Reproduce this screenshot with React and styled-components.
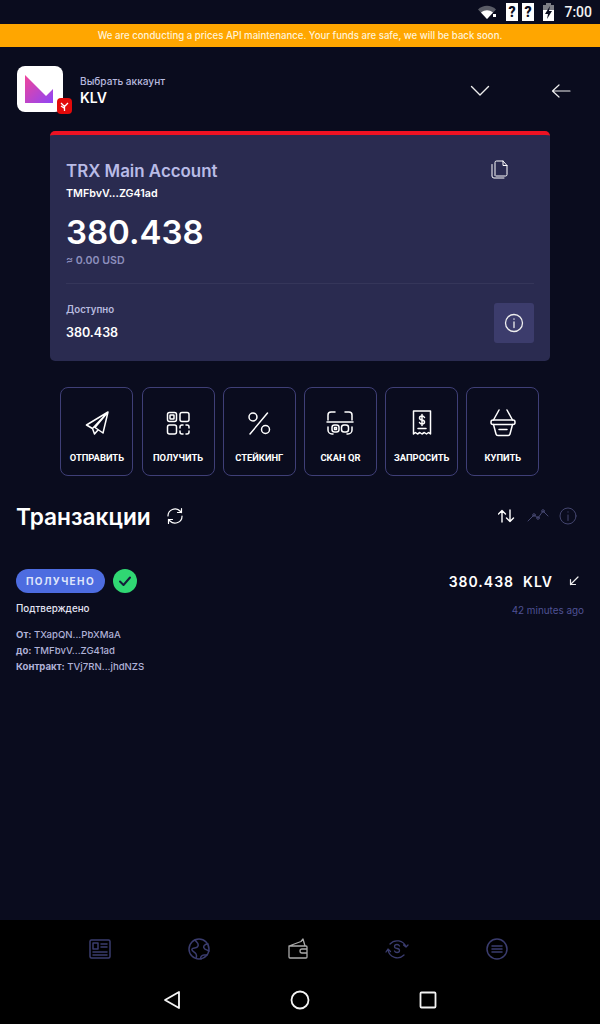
import React from "react";
import styled, { createGlobalStyle } from "styled-components";

const Global = createGlobalStyle`
  html, body { margin: 0; padding: 0; background: #0a0c1e; }
  * { box-sizing: border-box; }
`;

const Page = styled.div`
  width: 600px;
  height: 1024px;
  display: flex;
  flex-direction: column;
  background: #0a0c1e;
  color: #fff;
  font-family: Inter, "Noto Sans", sans-serif;
  overflow: hidden;
`;

const StatusBar = styled.div`
  height: 24px;
  display: flex;
  align-items: center;
  justify-content: flex-end;
  gap: 4px;
  padding-right: 8px;
`;

const StatusTime = styled.span`
  font-family: Roboto, sans-serif;
  font-size: 14px;
  font-weight: 500;
  margin-left: 6px;
  color: #f2f2f2;
`;

const Banner = styled.div`
  height: 23px;
  background: #ffa600;
  display: flex;
  align-items: center;
  justify-content: center;
  font-size: 9.65px;
  font-weight: 500;
  color: #fff3d8;
`;

const Main = styled.main`
  flex: 1;
  display: flex;
  flex-direction: column;
`;

const Header = styled.header`
  display: flex;
  align-items: center;
  padding: 19px 29px 0 17px;
`;

const LogoWrap = styled.div`
  position: relative;
  width: 46px;
  height: 46px;
  border-radius: 8px;
  background: #fff;
  display: flex;
  align-items: center;
  justify-content: center;
  margin-right: 17px;
`;

const Badge = styled.div`
  position: absolute;
  right: -9px;
  bottom: -2px;
  width: 15px;
  height: 16px;
  border-radius: 4px;
  background: #e20a0a;
  display: flex;
  align-items: center;
  justify-content: center;
`;

const AccountInfo = styled.div`
  flex: 1;
  display: flex;
  flex-direction: column;
  gap: 2px;
  padding-top: 2px;
`;

const AccountLabel = styled.div`
  font-size: 10.1px;
  font-weight: 500;
  color: #b7b9df;
`;

const AccountName = styled.div`
  font-size: 14px;
  font-weight: 600;
  color: #fff;
`;

const HeaderIcons = styled.div`
  display: flex;
  align-items: center;
  gap: 61px;
  padding-top: 3px;
`;

const Card = styled.section`
  margin: 19px 50px 0;
  height: 230px;
  border-radius: 5px;
  background: #2a2b50;
  border-top: 4px solid #ee1223;
  padding: 0 16px;
  display: flex;
  flex-direction: column;
`;

const CardTop = styled.div`
  display: flex;
  justify-content: space-between;
  height: 149px;
  border-bottom: 1px solid #35365a;
`;

const CardTitle = styled.div`
  font-size: 16.9px;
  font-weight: 600;
  line-height: 20px;
  margin-top: 26px;
  color: #b9bbe6;
`;

const CardAddress = styled.div`
  font-size: 10.7px;
  font-weight: 600;
  line-height: 14px;
  margin-top: 6px;
  color: #fff;
`;

const CardBalance = styled.div`
  font-size: 33px;
  font-weight: 600;
  line-height: 40px;
  margin-top: 11px;
  color: #fff;
`;

const CardUsd = styled.div`
  font-size: 10.6px;
  font-weight: 600;
  line-height: 14px;
  margin-top: 2px;
  color: #8d8fbd;
`;

const CopyButton = styled.div`
  margin: 25px 26px 0 0;
`;

const CardBottom = styled.div`
  flex: 1;
  display: flex;
  justify-content: space-between;
  align-items: flex-start;
  padding-top: 19px;
`;

const AvailableLabel = styled.div`
  font-size: 9.7px;
  font-weight: 600;
  line-height: 14px;
  color: #b7b9df;
`;

const AvailableValue = styled.div`
  font-size: 12.5px;
  font-weight: 600;
  line-height: 16px;
  margin-top: 8px;
  color: #fff;
`;

const InfoButton = styled.div`
  width: 40px;
  height: 40px;
  border-radius: 3px;
  background: #3c3c6c;
  display: flex;
  align-items: center;
  justify-content: center;
`;

const Actions = styled.div`
  display: flex;
  gap: 8.2px;
  margin: 26px 0 0 60.4px;
`;

const Action = styled.div`
  width: 73px;
  height: 89px;
  border: 1px solid #3f3f77;
  border-radius: 8px;
  display: flex;
  flex-direction: column;
  align-items: center;
  padding-top: 22px;
`;

const ActionIcon = styled.div`
  height: 26px;
  display: flex;
  align-items: center;
  justify-content: center;
`;

const ActionLabel = styled.div`
  margin-top: 16px;
  font-family: Roboto, sans-serif;
  font-size: 9.4px;
  font-weight: 700;
  color: #fff;
`;

const SectionHead = styled.div`
  display: flex;
  align-items: center;
  margin-top: 26px;
  padding: 0 23px 0 16px;
  height: 28px;
`;

const SectionTitle = styled.h2`
  margin: 0 15px 0 0;
  font-size: 22.7px;
  font-weight: 600;
  color: #fff;
`;

const SectionTools = styled.div`
  margin-left: auto;
  display: flex;
  align-items: center;
  gap: 10px;
`;

const Tx = styled.div`
  display: flex;
  justify-content: space-between;
  margin-top: 39px;
  padding: 0 16px;
`;

const TxLeft = styled.div`
  display: flex;
  flex-direction: column;
`;

const TxStatusRow = styled.div`
  display: flex;
  align-items: center;
  gap: 8px;
`;

const Pill = styled.div`
  width: 89px;
  height: 24px;
  border-radius: 12px;
  background: #4d6ce0;
  display: flex;
  align-items: center;
  justify-content: center;
  font-size: 10px;
  font-weight: 700;
  letter-spacing: 1.4px;
  color: #dfe5fb;
`;

const CheckDot = styled.div`
  width: 24px;
  height: 24px;
  border-radius: 50%;
  background: #30d873;
  display: flex;
  align-items: center;
  justify-content: center;
`;

const Confirmed = styled.div`
  margin-top: 9px;
  font-size: 9.8px;
  font-weight: 500;
  line-height: 14px;
  color: #e4e4f2;
`;

const Addresses = styled.div`
  margin-top: 11px;
  display: flex;
  flex-direction: column;
`;

const AddressRow = styled.div`
  font-size: 9.6px;
  font-weight: 500;
  line-height: 16px;
  color: #b0b2d8;
  b { font-weight: 700; }
`;

const TxRight = styled.div`
  display: flex;
  flex-direction: column;
  align-items: flex-end;
`;

const Amount = styled.div`
  display: flex;
  align-items: center;
  height: 24px;
  gap: 16px;
  padding-right: 5px;
  font-size: 14px;
  font-weight: 600;
  letter-spacing: 1px;
  color: #fff;
`;

const Ago = styled.div`
  margin-top: 10px;
  font-size: 9.9px;
  line-height: 14px;
  color: #4f5294;
`;

const BottomNav = styled.nav`
  height: 56px;
  background: #000;
  display: flex;
  align-items: center;
  justify-content: space-between;
  padding: 2px 92px 0 89px;
`;

const AndroidBar = styled.div`
  height: 48px;
  background: #000;
  display: flex;
  align-items: center;
  justify-content: space-between;
  padding: 0 163px;
`;

const Svg = ({ size = 24, w, h, color = "#fff", sw = 1.5, children }) => (
  <svg
    width={w || size}
    height={h || size}
    viewBox={`0 0 ${w || size} ${h || size}`}
    fill="none"
    stroke={color}
    strokeWidth={sw}
    strokeLinecap="round"
    strokeLinejoin="round"
  >
    {children}
  </svg>
);

const actions = [
  {
    label: "ОТПРАВИТЬ",
    icon: (
      <Svg>
        <path d="M23 1 1.500 14l6 3.500L23 1ZM7.500 17.500l2 5.500 3.500-4M23 1 18 22l-8-5.500L23 1Z" />
      </Svg>
    ),
  },
  {
    label: "ПОЛУЧИТЬ",
    icon: (
      <Svg>
        <rect x="1.500" y="1.500" width="9" height="9" rx="2" />
        <rect x="4" y="4" width="4" height="4" rx="0.5" />
        <rect x="14" y="1.500" width="9" height="9" rx="2" />
        <rect x="1.500" y="14" width="9" height="9" rx="2" />
        <path d="M14 17v-1a2 2 0 0 1 2-2h1M20 14h1a2 2 0 0 1 2 2v1M23 20v1a2 2 0 0 1-2 2h-1M17 23h-1a2 2 0 0 1-2-2v-1" />
      </Svg>
    ),
  },
  {
    label: "СТЕЙКИНГ",
    icon: (
      <Svg>
        <circle cx="6" cy="6" r="4" />
        <circle cx="18.500" cy="18.500" r="4" />
        <path d="M20.500 2 3 23" />
      </Svg>
    ),
  },
  {
    label: "СКАН QR",
    icon: (
      <Svg w={28} h={26}>
        <path d="M2 10V5a3 3 0 0 1 3-3h4M19 2h4a3 3 0 0 1 3 3v5M1 12h26M2 17v3a4 4 0 0 0 4 4h1M26 17v3a4 4 0 0 1-4 4h-1" />
        <rect x="6" y="15" width="7" height="7" rx="2.500" />
        <rect x="15.500" y="15" width="7" height="7" rx="2.500" />
        <rect x="8.500" y="17.500" width="2" height="2" />
      </Svg>
    ),
  },
  {
    label: "ЗАПРОСИТЬ",
    icon: (
      <Svg w={20} h={26}>
        <path d="M1.500 1h17v23l-2-1.500-2 1.500-2.200-1.500L10 24l-2.200-1.500L5.500 24l-2-1.500-2 1.500V1Z" />
        <path d="M12.500 7.500C12 6.500 11 6 10 6c-1.500 0-2.500 1-2.500 2s1 1.800 2.500 2c1.500.2 2.500 1 2.500 2s-1 2-2.500 2c-1 0-2-.5-2.500-1.500M10 4.500V15.500M6 18.500h8" />
      </Svg>
    ),
  },
  {
    label: "КУПИТЬ",
    icon: (
      <Svg w={26} h={28}>
        <path d="M9 1 3.500 11M17 1l5.500 10" />
        <rect x="1" y="11" width="24" height="4.500" rx="2" />
        <path d="M3.500 15.500 6 25a2 2 0 0 0 2 1.500h10a2 2 0 0 0 2-1.500l2.500-9.500M9 20.500h8" />
      </Svg>
    ),
  },
];

const App = () => (
  <>
    <Global />
    <Page>
      <StatusBar>
        <svg width="20" height="14" viewBox="0 0 20 14" style={{ marginRight: 4 }}>
          <path d="M0 4.500C5-.5 13-.5 18 4.500L9 14 0 4.500Z" fill="#5a5c66" />
          <path d="M3 7.500c4-3 8-3 12 0L9 14 3 7.500Z" fill="#fff" />
          <rect x="15" y="9" width="3" height="3" fill="#fff" />
        </svg>
        <svg width="12" height="18" viewBox="0 0 12 18">
          <path d="M0 0h12v18H0Z" fill="#fff" />
          <text x="6" y="14" fontSize="14" fontWeight="900" textAnchor="middle" fill="#0a0c1e" fontFamily="Roboto">?</text>
        </svg>
        <svg width="12" height="18" viewBox="0 0 12 18">
          <path d="M0 0h12v18H0Z" fill="#fff" />
          <text x="6" y="14" fontSize="14" fontWeight="900" textAnchor="middle" fill="#0a0c1e" fontFamily="Roboto">?</text>
        </svg>
        <svg width="11" height="18" viewBox="0 0 11 18" style={{ marginLeft: 5 }}>
          <path d="M3 0h5v2h3v6H0V2h3Z" fill="#7d7e85" />
          <path d="M0 7h11v11H0Z" fill="#fff" />
          <path d="M7 3 2 11h3l-1 5 5-8H6Z" fill="#0a0c1e" />
        </svg>
        <StatusTime>7:00</StatusTime>
      </StatusBar>
      <Banner>We are conducting a prices API maintenance. Your funds are safe, we will be back soon.</Banner>
      <Main>
        <Header>
          <LogoWrap>
            <svg width="28" height="28" viewBox="0 0 28 28" style={{ marginLeft: -2 }}>
              <defs>
                <linearGradient id="klv" x1="0" y1="0" x2="1" y2="1">
                  <stop offset="0" stopColor="#f0459a" />
                  <stop offset="1" stopColor="#8f45f5" />
                </linearGradient>
              </defs>
              <path d="M0 0 21 21 28 14V28H0Z" fill="url(#klv)" />
            </svg>
            <Badge>
              <svg width="11" height="11" viewBox="0 0 11 11" fill="none" stroke="#fff" strokeWidth="1.300">
                <path d="M2 2 5.500 5.500 9 2M5.500 5.500V10M2 5l3 2" />
              </svg>
            </Badge>
          </LogoWrap>
          <AccountInfo>
            <AccountLabel>Выбрать аккаунт</AccountLabel>
            <AccountName>KLV</AccountName>
          </AccountInfo>
          <HeaderIcons>
            <Svg w={20} h={12} sw={1.400} color="#eee">
              <path d="M1.500 1.500 10 10l8.500-8.500" />
            </Svg>
            <Svg w={20} h={14} sw={1.200} color="#eee">
              <path d="M19 7H2M8 1 1.500 7 8 13" />
            </Svg>
          </HeaderIcons>
        </Header>

        <Card>
          <CardTop>
            <div>
              <CardTitle>TRX Main Account</CardTitle>
              <CardAddress>TMFbvV...ZG41ad</CardAddress>
              <CardBalance>380.438</CardBalance>
              <CardUsd>≈ 0.00 USD</CardUsd>
            </div>
            <CopyButton>
              <Svg w={17} h={19} sw={1}>
                <path d="M4 15.500V2.500A1.500 1.500 0 0 1 5.500 1H12l4 4.500v9a1.500 1.500 0 0 1-1.500 1.500H5" />
                <path d="M1 4.500v11.500A2 2 0 0 0 3 18h10M12 1v4.500h4" />
              </Svg>
            </CopyButton>
          </CardTop>
          <CardBottom>
            <div>
              <AvailableLabel>Доступно</AvailableLabel>
              <AvailableValue>380.438</AvailableValue>
            </div>
            <InfoButton>
              <Svg size={20} sw={1.300} color="#eee">
                <circle cx="10" cy="10" r="8.500" />
                <path d="M10 9v5.500M10 5.800v.4" />
              </Svg>
            </InfoButton>
          </CardBottom>
        </Card>

        <Actions>
          {actions.map((a) => (
            <Action key={a.label}>
              <ActionIcon>{a.icon}</ActionIcon>
              <ActionLabel>{a.label}</ActionLabel>
            </Action>
          ))}
        </Actions>

        <SectionHead>
          <SectionTitle>Транзакции</SectionTitle>
          <Svg size={18} sw={1.200}>
            <path d="M2 9a7 7 0 0 1 12-5l1.500 1.500M16 9a7 7 0 0 1-12 5l-1.500-1.500M15.500 1.500v4h-4M2.500 16.500v-4h4" />
          </Svg>
          <SectionTools>
            <Svg w={19} h={14} sw={1.400}>
              <path d="M4 13V1.500M.5 5 4 1.500 7.500 5M12 1v11.500M8.500 9l3.500 3.500L15.500 9" />
            </Svg>
            <Svg w={22} h={14} sw={1} color="#44466f">
              <path d="M1 12 7 6l4 3 5-7 5 5" />
              <circle cx="7" cy="6" r="1.300" />
              <circle cx="11" cy="9" r="1.300" />
              <circle cx="16" cy="2" r="1.300" />
            </Svg>
            <Svg w={18} h={18} sw={1} color="#44466f">
              <circle cx="9" cy="9" r="8" />
              <path d="M9 8v5.500M9 4.800v.4" />
            </Svg>
          </SectionTools>
        </SectionHead>

        <Tx>
          <TxLeft>
            <TxStatusRow>
              <Pill>ПОЛУЧЕНО</Pill>
              <CheckDot>
                <Svg w={14} h={12} sw={2} color="#14203a">
                  <path d="M2 6.500 5.500 10 12 2.500" />
                </Svg>
              </CheckDot>
            </TxStatusRow>
            <Confirmed>Подтверждено</Confirmed>
            <Addresses>
              <AddressRow><b>От:</b> TXapQN...PbXMaA</AddressRow>
              <AddressRow><b>до:</b> TMFbvV...ZG41ad</AddressRow>
              <AddressRow><b>Контракт:</b> TVj7RN...jhdNZS</AddressRow>
            </Addresses>
          </TxLeft>
          <TxRight>
            <Amount>
              <span>380.438&nbsp; KLV</span>
              <Svg size={10} sw={1.200} color="#eee">
                <path d="M9 1 1.500 8.500M1.500 3.500v5h5" />
              </Svg>
            </Amount>
            <Ago>42 minutes ago</Ago>
          </TxRight>
        </Tx>
      </Main>

      <BottomNav>
        <Svg size={22} sw={1.500} color="#3a3c6e">
          <rect x="1" y="2" width="20" height="18" rx="1.500" />
          <rect x="4" y="5" width="5" height="6" />
          <path d="M12 6h6M12 9h6M4 14h14M4 17h14" />
        </Svg>
        <Svg size={22} sw={1.500} color="#3a3c6e">
          <circle cx="11" cy="11" r="10" />
          <path d="M7 2c2 3 4 3 3 6S5 9 4 11s3 3 4 5 0 4 0 4M20 6c-3 0-5 2-4 4s4 2 5 3M13 21c-1-2 1-4 3-4s3 0 3 0" />
        </Svg>
        <Svg size={22} sw={1.300} color="#aaa">
          <path d="M2 8 14 3.500 16 1l2 7M2 8h17a1 1 0 0 1 1 1v10a1 1 0 0 1-1 1H3a1 1 0 0 1-1-1V8Zm18 3h-5a2 2 0 0 0-2 2 2 2 0 0 0 2 2h5" />
        </Svg>
        <Svg size={24} sw={1.300} color="#3a3c6e">
          <path d="M5 7a9.500 9.500 0 0 1 16 3l2-2M3 13a9.500 9.500 0 0 0 16 5M1 15l2-3 2.500 2.500M21 10l-2.500-2" />
          <path d="M14.500 9c-.5-1-1.500-1.500-2.500-1.500-1.500 0-2.500 1-2.500 2s1 1.800 2.500 2 2.500 1 2.500 2-1 2-2.500 2c-1 0-2-.5-2.500-1.500" />
        </Svg>
        <Svg size={22} sw={1.500} color="#3a3c6e">
          <circle cx="11" cy="11" r="10" />
          <path d="M6 8h10M6 11h10M6 14h10" />
        </Svg>
      </BottomNav>
      <AndroidBar>
        <Svg w={18} h={20} sw={1.800} color="#f4f4f4">
          <path d="M16 2v16L2 10Z" />
        </Svg>
        <Svg size={20} sw={1.800} color="#f4f4f4">
          <circle cx="10" cy="10" r="8.500" />
        </Svg>
        <Svg w={18} h={18} sw={1.800} color="#f4f4f4">
          <rect x="1.500" y="1.500" width="15" height="15" rx="1" />
        </Svg>
      </AndroidBar>
    </Page>
  </>
);

export default App;
